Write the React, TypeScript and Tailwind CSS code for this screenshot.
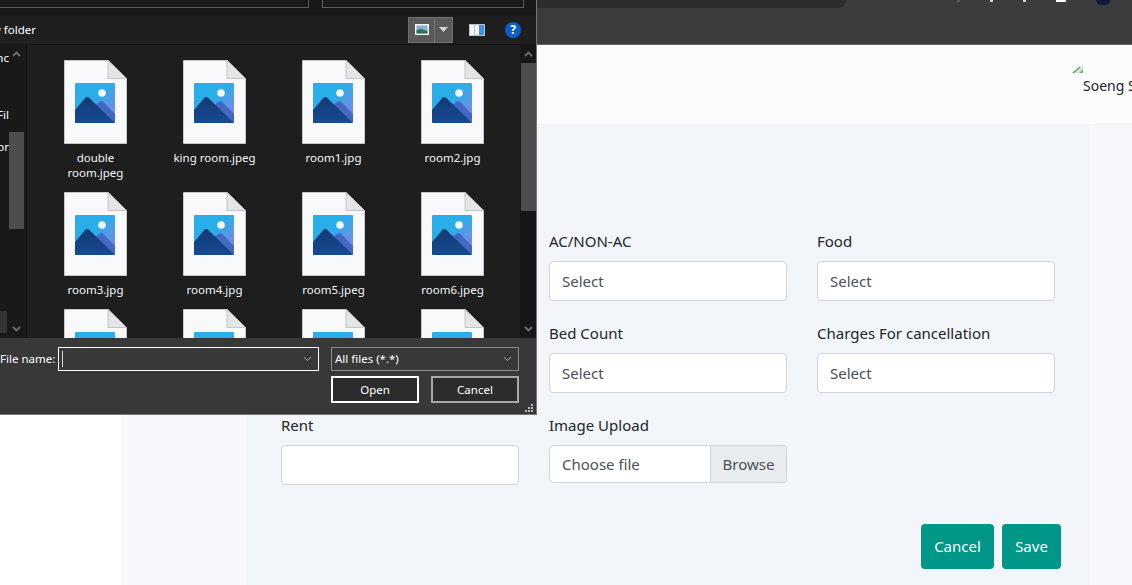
const uiFont = { fontFamily: '"Noto Sans", "Open Sans", sans-serif' };

const files = [
  "double room.jpeg",
  "king room.jpeg",
  "room1.jpg",
  "room2.jpg",
  "room3.jpg",
  "room4.jpg",
  "room5.jpeg",
  "room6.jpeg",
  "room7.jpg",
  "room8.jpg",
  "room9.jpg",
  "room10.jpg",
];

function FileIcon({ id }: { id: number }) {
  return (
    <svg width="63" height="84" viewBox="0 0 63 84" className="block shrink-0">
      <defs>
        <linearGradient id={`sky${id}`} x1="0.2" y1="0.1" x2="1" y2="0.9">
          <stop offset="0.35" stopColor="#2aaeea" />
          <stop offset="1" stopColor="#8d7fe0" />
        </linearGradient>
        <linearGradient id={`big${id}`} x1="0" y1="0" x2="0" y2="1">
          <stop offset="0" stopColor="#123a72" />
          <stop offset="1" stopColor="#164a94" />
        </linearGradient>
      </defs>
      <path d="M0.5 0.5H44L62.5 18.5V83.5H0.5Z" fill="#f8f9fb" stroke="#c9c9cb" />
      <path d="M44 0.5V18.5H62.5Z" fill="#e4e5e7" stroke="#c4c4c6" />
      <rect x="11" y="23" width="40" height="40" rx="1" fill={`url(#sky${id})`} />
      <circle cx="38" cy="33" r="3.8" fill="#f4f7fd" />
      <path d="M30 46L36 41.5Q37.6 40.6 39 41.8L51 54V62H38Z" fill="#4468c2" />
      <path
        d="M11 50L21 38.2Q23.2 36 25.6 38.2L51 63H12Q11 63 11 62Z"
        fill={`url(#big${id})`}
      />
    </svg>
  );
}

function Chevron({
  up = false,
  color = "#6f6f6f",
  className = "",
}: {
  up?: boolean;
  color?: string;
  className?: string;
}) {
  return (
    <svg width="9" height="6" viewBox="0 0 9 6" className={className}>
      <path
        d={up ? "M1 5L4.5 1.5L8 5" : "M1 1L4.5 4.5L8 1"}
        fill="none"
        stroke={color}
        strokeWidth={up || color === "#6f6f6f" ? 1.8 : 1}
      />
    </svg>
  );
}

function ToolbarIcons() {
  return (
    <div className="flex items-center">
      <div className="flex h-[26px] w-[45px] border border-[#707070] bg-[#5a5a5a]">
        <div className="flex w-[26px] items-center justify-center border-r border-[#747474]">
          <svg width="14" height="11" viewBox="0 0 14 11">
            <rect width="14" height="11" fill="#f5f5f5" />
            <rect x="1.5" y="1.5" width="11" height="8" fill="#7fb3d8" />
            <path d="M1.5 6L6 5L12.5 7V9.500H1.500Z" fill="#3b6b57" />
          </svg>
        </div>
        <div className="flex flex-1 items-center justify-center">
          <svg width="9" height="5" viewBox="0 0 9 5">
            <path d="M0 0H9L4.500 5Z" fill="#d5d5d5" />
          </svg>
        </div>
      </div>
      <svg width="16" height="12" viewBox="0 0 16 12" className="ml-4">
        <rect width="16" height="12" fill="#b9c2cc" />
        <rect x="1" y="1" width="4" height="10" fill="#f5f5f5" />
        <rect x="6" y="1" width="4" height="10" fill="#f5f5f5" />
        <rect x="10" y="1" width="5" height="10" fill="#3f93e0" />
      </svg>
      <div className="ml-[20px] flex h-4 w-4 items-center justify-center rounded-full bg-[#0a5fc4] text-[12px] font-bold leading-none text-white">
        ?
      </div>
    </div>
  );
}

function FileDialog() {
  return (
    <div
      className="absolute left-0 top-0 flex h-[415px] w-[537px] flex-col border-r border-b border-[#777] bg-[#1e1e1e] text-[11.5px] text-white"
      style={uiFont}
    >
      <div className="flex h-[15px] shrink-0 gap-[13px] bg-[#191919]">
        <div className="h-2 w-[309px] border-r border-b border-[#5c5c5c]" />
        <div className="h-2 w-[202px] border-x border-b border-[#5c5c5c]" />
      </div>

      <div className="flex h-[30px] shrink-0 items-center justify-between border-b border-[#141414] bg-[#1f1f1f] pl-0 pr-[15px]">
        <div className="flex w-[36px] justify-end overflow-hidden whitespace-nowrap">
          <span>New folder</span>
        </div>
        <ToolbarIcons />
      </div>

      <div className="flex min-h-0 flex-1">
        <div className="flex w-[27px] shrink-0 border-r border-[#141414] bg-[#191919]">
          <div className="relative w-[9px] overflow-hidden">
            <div className="absolute right-0 top-[5px] whitespace-nowrap leading-[15px]">nc</div>
            <div className="absolute right-0 top-[62px] whitespace-nowrap leading-[15px]">Fil</div>
            <div className="absolute right-0 top-[94px] whitespace-nowrap leading-[15px]">or</div>
            <div className="absolute bottom-[5px] left-0 h-[22px] w-[7px] bg-[#333]" />
          </div>
          <div className="flex w-[15px] flex-col items-center pt-[6px]">
            <Chevron up />
            <div className="mt-[75px] h-[97px] w-full bg-[#4d4d4d]" />
            <Chevron className="mt-auto mb-[6px]" />
          </div>
        </div>

        <div className="min-w-0 flex-1 overflow-hidden pl-[9px] pt-[15px]">
          <div className="grid w-[476px] grid-cols-4">
            {files.map((name, i) => (
              <div key={name} className="flex flex-col items-center pb-3">
                <FileIcon id={i} />
                <div className="mt-[6px] w-[90px] text-center leading-[15px] text-[#f2f6fa]">
                  {name}
                </div>
              </div>
            ))}
          </div>
        </div>

        <div className="flex w-4 shrink-0 flex-col items-center bg-[#171717] pt-[6px]">
          <Chevron up />
          <div className="mt-[6px] h-[148px] w-[15px] bg-[#4d4d4d]" />
          <Chevron className="mt-auto mb-[6px]" />
        </div>
      </div>

      <div className="relative h-[76px] shrink-0 bg-[#383838] pt-[9px]">
        <div className="flex items-center">
          <span className="w-[58px] whitespace-nowrap">File name:</span>
          <div className="flex h-6 w-[261px] items-center justify-between border border-white px-[3px] pr-[6px]">
            <div className="h-4 w-px bg-[#d8d8d8]" />
            <Chevron color="#b4b4b4" />
          </div>
          <div className="ml-3 flex h-6 w-[188px] items-center justify-between border border-[#8c8c8c] pl-[3px] pr-[6px]">
            <span>All files (*.*)</span>
            <Chevron color="#b4b4b4" />
          </div>
        </div>
        <div className="mt-[5px] flex justify-end gap-3 pr-[17px]">
          <div className="flex h-[27px] w-[88px] items-center justify-center border-2 border-white bg-[#2c2c2c]">
            Open
          </div>
          <div className="flex h-[27px] w-[88px] items-center justify-center border-2 border-[#a8a8a8] bg-[#2c2c2c]">
            Cancel
          </div>
        </div>
        <div className="absolute bottom-[2px] right-[3px] grid grid-cols-3 gap-px">
          <span />
          <span />
          <span className="h-[2px] w-[2px] bg-[#bbb]" />
          <span />
          <span className="h-[2px] w-[2px] bg-[#bbb]" />
          <span className="h-[2px] w-[2px] bg-[#bbb]" />
          <span className="h-[2px] w-[2px] bg-[#bbb]" />
          <span className="h-[2px] w-[2px] bg-[#bbb]" />
          <span className="h-[2px] w-[2px] bg-[#bbb]" />
        </div>
      </div>
    </div>
  );
}

function SelectField({ label, className = "" }: { label: string; className?: string }) {
  return (
    <div className={className}>
      <label className="block leading-6 text-[#212529]">{label}</label>
      <div className="mt-2 flex h-10 items-center rounded border border-[#ced4da] bg-white px-3 text-[#495057]">
        Select
      </div>
    </div>
  );
}

function BrowserChrome() {
  return (
    <div className="flex h-[45px] shrink-0 items-start justify-between border-b border-[#666] bg-[#3c3c3c]">
      <div className="h-2 w-[846px] rounded-br-lg bg-[#2d2d2d]" />
      <div className="flex items-start gap-[30px] pr-[22px]">
        <span className="h-[2px] w-[3px] bg-[#6a4a6a]" />
        <span className="h-[2px] w-[3px] bg-[#d8d8d8]" />
        <span className="h-[2px] w-[3px] bg-[#d8d8d8]" />
        <span className="h-[2px] w-[10px] bg-white" />
        <span className="h-[5px] w-[14px] rounded-b-full bg-[#10183c]" />
      </div>
    </div>
  );
}

function RoomForm() {
  return (
    <div className="h-full w-[844px] bg-[#f2f5fa] px-[35px] pt-[104px]" style={uiFont}>
      <div className="grid w-[774px] grid-cols-3 gap-x-[30px] gap-y-5 text-[15px]">
        <SelectField label="AC/NON-AC" className="col-start-2" />
        <SelectField label="Food" />
        <SelectField label="Bed Count" className="col-start-2" />
        <SelectField label="Charges For cancellation" />
        <div>
          <label className="block leading-6 text-[#212529]">Rent</label>
          <div className="mt-2 h-10 rounded border border-[#ced4da] bg-white" />
        </div>
        <div>
          <label className="block leading-6 text-[#212529]">Image Upload</label>
          <div className="mt-2 flex h-[38px] items-center overflow-hidden rounded border border-[#ced4da] bg-white text-[#495057]">
            <span className="flex-1 px-3">Choose file</span>
            <span className="flex h-full w-[76px] items-center justify-center border-l border-[#ced4da] bg-[#e9ecef]">
              Browse
            </span>
          </div>
        </div>
      </div>
      <div className="mt-[39px] flex w-[780px] justify-end gap-2 text-[15px] text-white">
        <button className="h-[45px] w-[73px] rounded bg-[#009688]">Cancel</button>
        <button className="h-[45px] w-[59px] rounded bg-[#009688]">Save</button>
      </div>
    </div>
  );
}

export default function App() {
  return (
    <div className="relative flex h-[585px] w-[1132px] flex-col overflow-hidden bg-white">
      <BrowserChrome />
      <div className="flex h-[80px] shrink-0 justify-end border-b border-[#f0f2f6] bg-[#fbfcfe]" style={uiFont}>
        <div className="w-[60px] overflow-hidden pt-[19px]">
          <svg width="13" height="10" viewBox="0 0 13 10" className="block">
            <path d="M1 9L11 1V9Z" fill="#d9e4d9" />
            <path d="M1 9L8 3" stroke="#5aa84a" strokeWidth="1.500" />
            <path d="M11 5V9H7Z" fill="#9a9a9a" />
          </svg>
          <div className="ml-[11px] mt-[2px] whitespace-nowrap text-[14px] leading-5 text-[#212529]">
            Soeng Souy
          </div>
        </div>
      </div>
      <div className="flex min-h-0 flex-1">
        <div className="w-[121px] shrink-0 bg-white" />
        <div className="flex-1 bg-[#f7f8fb] pl-[125px]">
          <RoomForm />
        </div>
      </div>
      <FileDialog />
    </div>
  );
}
